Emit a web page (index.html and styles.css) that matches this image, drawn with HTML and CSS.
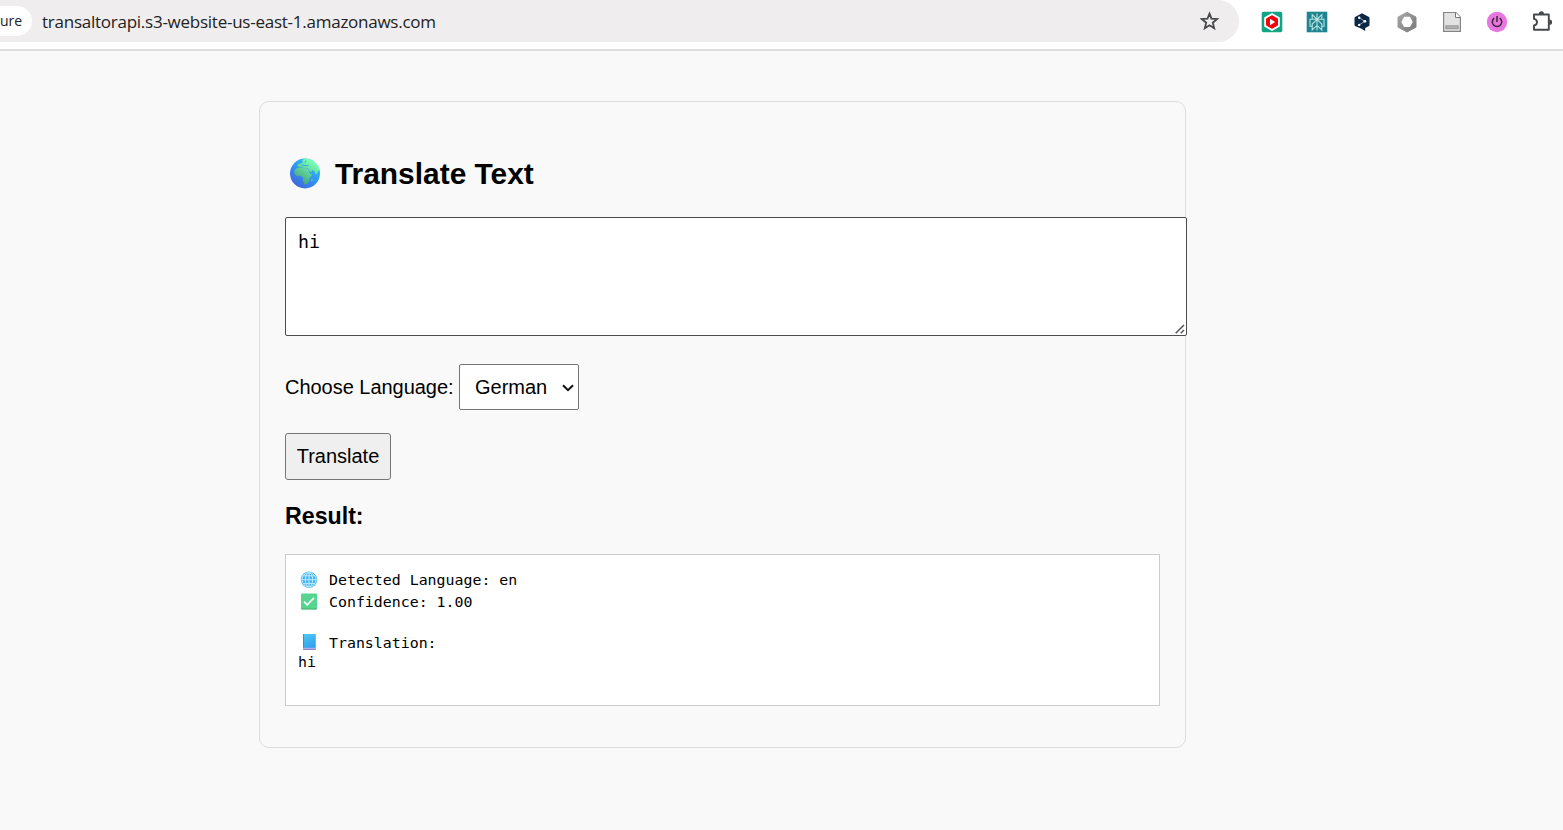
FILE: index.html
```html
<!DOCTYPE html>
<html lang="en">
<head>
<meta charset="utf-8">
<title>Translate Text</title>
<link rel="stylesheet" href="styles.css">
</head>
<body>
<header class="toolbar">
  <div class="address">
    <span class="security">ure</span>
    <span class="url">transaltorapi.s3-website-us-east-1.amazonaws.com</span>
    <svg class="star" width="20" height="20" viewBox="0 0 20 20" fill="none" stroke="#47484a" stroke-width="1.8"><path d="M9.5 2.6l2 5.1 5.6.4-4.3 3.6 1.4 5.5-4.7-3-4.7 3 1.4-5.5-4.3-3.6 5.6-.4z"/></svg>
  </div>
  <div class="extensions">
    <svg width="22" height="22" viewBox="0 0 22 22"><rect x=".7" y=".7" width="20.6" height="20.6" rx="1.8" fill="#12a583"/><path d="M11 2l7.8 4.5v9L11 20l-7.8-4.5v-9z" fill="#fff"/><path d="M11 4.7l5.5 3.1v6.4L11 17.3l-5.5-3.1V7.8z" fill="#f5000b" stroke="#f5000b" stroke-linejoin="round"/><path d="M9 7.8l5.2 3.2L9 14.2z" fill="#fff"/></svg>
    <svg width="22" height="22" viewBox="0 0 22 22"><rect x=".7" y=".7" width="20.6" height="20.6" fill="#208490"/><path d="M11 2.5v17M11 8.3L6.2 3.5v4.8h9.6V3.5zM6.2 8.3H4v7h2.2v3.6L11 14.4l4.8 4.5v-3.6H18v-7h-2.2M11 8.3l-4.8 4.8v2.2M11 8.3l4.8 4.8v2.2" fill="none" stroke="#b7e2df" stroke-width="1.1"/></svg>
    <svg width="22" height="22" viewBox="0 0 22 22"><path d="M11 2.2l7 3.9q.5.3.5.9v7q0 .6-.5.9L14.2 17v3l-3.6-2.2L4 14.9q-.5-.3-.5-.9V7q0-.6.5-.9z" fill="#0d2746"/><path d="M8.2 6.8l5.7 3.5-5.7 3.6" fill="none" stroke="#92a2b5" stroke-width="1"/><g fill="#fff"><circle cx="8.2" cy="6.8" r="1.2"/><circle cx="13.9" cy="10.3" r="1.4"/><circle cx="8.2" cy="13.9" r="1.2"/></g></svg>
    <svg width="22" height="22" viewBox="0 0 22 22"><defs><linearGradient id="hexagon" x2="1" y2="1"><stop stop-color="#a9a9a9"/><stop offset="1" stop-color="#777"/></linearGradient></defs><path d="M11 1.3l9 4.8v10l-9 4.9-9-4.9v-10z" fill="url(#hexagon)" stroke="url(#hexagon)" stroke-linejoin="round"/><path d="M8.1 5.8h5.8l2.8 5.1-2.8 5.2H8.1l-2.8-5.2z" fill="#fff"/></svg>
    <svg width="22" height="22" viewBox="0 0 22 22"><path d="M2.6 1.5h12.3l4.5 4.7v14.1H2.6z" fill="#e2e2e2" stroke="#858585" stroke-width="1.2"/><path d="M14.5 1.5v5h5" fill="#fff" stroke="#777"/><rect x="4.8" y="14.8" width="12.4" height="3" fill="#b0b0b0" stroke="#898989" stroke-width=".7"/></svg>
    <svg width="22" height="22" viewBox="0 0 22 22"><circle cx="11" cy="11" r="10.2" fill="#e677dd"/><path d="M8.2 7.1a4.7 4.7 0 1 0 5.6 0M11 5v6" fill="none" stroke="#412039" stroke-width="1.5"/></svg>
    <svg width="22" height="22" viewBox="0 0 22 22"><path d="M3 3.5h14.8v15.3H3v-4.3q3-.5 3-3.3T3 7.9z" fill="none" stroke="#47484a" stroke-width="1.9" stroke-linejoin="round"/><path d="M7.8 3.2a2.6 3 0 0 1 5.2 0zM18.3 8.5a2.8 2.7 0 0 1 0 5.4z" fill="#47484a"/></svg>
  </div>
</header>
<main class="page">
  <section class="card">
    <h2 class="title">
      <svg class="globe" width="32" height="32" viewBox="0 0 32 32"><defs><linearGradient id="ocean" x1=".2" y1="1" x2=".8" y2=".2"><stop stop-color="#4560d2"/><stop offset=".45" stop-color="#3588f0"/><stop offset="1" stop-color="#2bbcfc"/></linearGradient><linearGradient id="land" gradientUnits="userSpaceOnUse" x1="10" y1="26" x2="24" y2="4"><stop stop-color="#429b78"/><stop offset="1" stop-color="#78ffb4"/></linearGradient><clipPath id="disc"><circle cx="16" cy="15.5" r="15"/></clipPath></defs><circle cx="16" cy="15.5" r="15" fill="url(#ocean)"/><g fill="url(#land)" clip-path="url(#disc)"><path d="M8.5 8.5l.5-2.5 3-.5 2-1.8L13 2.5 16 0h8l8 8v6l-2-2-1.8 3.5-1.7 1-1-3.2-2.2-1.3-1.3 2.5-1.5-1.5-1.5-2.5-4.2.3-1.8-2.2-1.8.5z"/><path d="M8 10l4.5-.8 3.5 1.6 3 .2 2 5 2.5.2-3.2 4.3-.3 2.5-2.2 3-2.3.5-1.5-3.5.1-3.5-2.6-1.7-4 .2L5.3 15l.5-3z"/><path d="M22 21.5l1.5-1.5v2.5L22.2 24z"/></g><path d="M12.5 6.7l3.5 1 3.5-.2M17 2.5l-1 2" fill="none" stroke="#35a6ed" stroke-width=".9"/></svg>
      <span>Translate Text</span>
    </h2>
    <div class="input-wrap">
      <textarea class="source" spellcheck="false">hi</textarea>
      <svg class="grip" width="10" height="10" viewBox="0 0 10 10" stroke="#55555a" stroke-width="1.5"><path d="M.7 9.3L9 1M5.7 9.3L9 6"/></svg>
    </div>
    <div class="language">
      <label for="lang">Choose Language:</label>
      <div class="select-wrap">
        <select id="lang" class="select"><option>German</option></select>
        <svg class="chevron" width="12" height="8" viewBox="0 0 12 8"><path d="M1 1.2l5 5 5-5" fill="none" stroke="#111" stroke-width="2"/></svg>
      </div>
    </div>
    <button class="translate">Translate</button>
    <h3 class="result-title">Result:</h3>
    <div class="result">
      <div class="line emoji-line"><svg width="18" height="18" viewBox="0 0 18 18"><circle cx="9" cy="8.7" r="8.2" fill="#42b5f3"/><g fill="none" stroke="#c9eeff" stroke-width=".9"><circle cx="9" cy="8.7" r="7.1"/><ellipse cx="9" cy="8.7" rx="3.6" ry="7.2"/><path d="M9 1.5v14.4M2 8.7h14M3 4.8h12M3 12.6h12"/></g></svg><span>Detected Language: en</span></div>
      <div class="line emoji-line"><svg width="18" height="18" viewBox="0 0 18 18"><rect x="1" y=".4" width="16" height="16" rx="1" fill="#55d58d"/><path d="M1.5 15.9h15" stroke="#4caf79"/><path d="M4 8.6l3.2 3.3 6.8-7" fill="none" stroke="#fff" stroke-width="1.6"/></svg><span>Confidence: 1.00</span></div>
      <div class="line gap-line"></div>
      <div class="line book-line"><svg width="18" height="18" viewBox="0 0 18 18"><defs><linearGradient id="cover" x2=".4" y2="1"><stop stop-color="#4fcaf5"/><stop offset="1" stop-color="#36a2ed"/></linearGradient></defs><path d="M3 1q0-1 1-1h11.8v14H3z" fill="url(#cover)"/><path d="M3.5.2v14" stroke="#2b91d4"/><path d="M3 14.3h12.8" stroke="#b9b4ea"/><path d="M3 15.3h12.8" stroke="#7773c4" stroke-width="1.1"/></svg><span>Translation:</span></div>
      <div class="line last-line">hi</div>
    </div>
  </section>
</main>
</body>
</html>
```
FILE: styles.css
```css
* { box-sizing: border-box; }

body {
  margin: 0;
  height: 830px;
  overflow: hidden;
  background: #f9f9f9;
  color: #000;
  font: 20px "Liberation Sans", Arial, sans-serif;
}

.toolbar {
  display: flex;
  height: 51px;
  background: #fff;
  border-bottom: 2px solid #dfdfdf;
}

.address {
  display: flex;
  align-items: center;
  width: 1239px;
  height: 42px;
  background: #efedee;
  border-radius: 0 21px 21px 0;
  color: #222;
  font-family: "Open Sans", "Noto Sans", sans-serif;
}

.security {
  width: 32px;
  height: 30px;
  background: #fff;
  border-radius: 0 15px 15px 0;
  font-size: 14px;
  font-weight: 500;
  line-height: 30px;
}

.url {
  margin-left: 10px;
  font-size: 17px;
  letter-spacing: -0.25px;
  white-space: nowrap;
}

.star { margin: 0 19px 0 auto; }

.extensions {
  display: flex;
  align-items: center;
  gap: 23px;
  height: 43px;
  margin-left: 22.4px;
}

.extensions svg { flex: none; }

.page { padding: 50px 0 0 259px; }

.card {
  width: 927px;
  height: 647px;
  padding: 49px 25px 0;
  border: 1px solid #ddd;
  border-radius: 10px;
}

.title {
  display: flex;
  align-items: center;
  height: 46px;
  margin: 0 0 20px;
  padding-left: 4px;
  gap: 14px;
  font-size: 29.9px;
}

.input-wrap {
  position: relative;
  width: 902px;
  height: 119px;
}

.source {
  display: block;
  width: 902px;
  height: 119px;
  padding: 12px;
  border: 1px solid #4c4c50;
  border-radius: 2px;
  outline: 0;
  resize: none;
  background: #fff;
  font: 18.3px/24px "DejaVu Sans Mono", monospace;
}

.grip {
  position: absolute;
  right: 2px;
  bottom: 2px;
}

.language {
  display: flex;
  align-items: center;
  height: 46px;
  margin-top: 28px;
  gap: 6px;
}

.language label {
  width: 168px;
  letter-spacing: -0.03px;
  white-space: nowrap;
}

.select-wrap { position: relative; }

.select {
  display: block;
  width: 120px;
  height: 46px;
  padding: 0 6px 0 15px;
  border: 1px solid #767676;
  border-radius: 2px;
  appearance: none;
  background: #fff;
  color: #000;
  font: inherit;
}

.chevron {
  position: absolute;
  top: 20px;
  right: 5px;
  pointer-events: none;
}

.translate {
  display: block;
  width: 106px;
  height: 47px;
  margin-top: 23px;
  padding: 0;
  border: 1px solid #767676;
  border-radius: 3px;
  background: #efefef;
  color: #000;
  font: inherit;
}

.result-title {
  margin: 23px 0 25px;
  font-size: 23.2px;
  line-height: 26px;
}

.result {
  width: 875px;
  height: 152px;
  padding: 14px 12px;
  border: 1px solid #ccc;
  background: #fff;
  font: 14.9px/19px "DejaVu Sans Mono", monospace;
}

.line {
  display: flex;
  align-items: center;
  height: 19px;
  white-space: pre;
}

.line svg { margin: 0 11px 0 2px; }
.emoji-line { height: 22px; }
.gap-line { height: 19px; }
.book-line { height: 22px; }
.last-line { height: 17px; }
```
